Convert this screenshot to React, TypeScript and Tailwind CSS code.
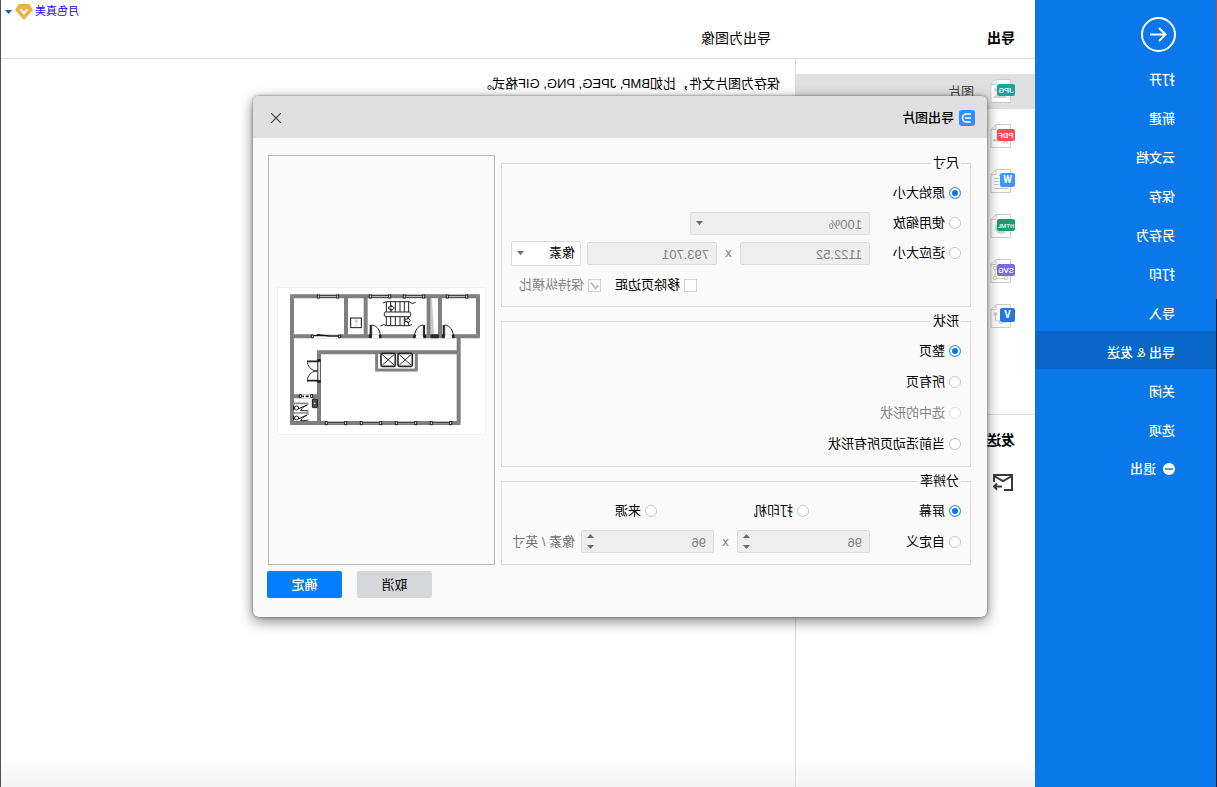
import React, { useState } from 'react';
import clsx from 'clsx';

type Format = { id: string; label?: string; color: string; badge: string; wide: boolean };

const menuItems = ['打开', '新建', '云文档', '保存', '另存为', '打印', '导入', '导出 & 发送', '关闭', '选项'];

const formats: Format[] = [
  { id: 'jpg', label: '图片', color: '#12a89d', badge: 'JPG', wide: true },
  { id: 'pdf', color: '#ff4b55', badge: 'PDF', wide: true },
  { id: 'word', color: '#3f96ff', badge: 'W', wide: false },
  { id: 'html', color: '#12a06e', badge: 'HTML', wide: true },
  { id: 'svg', color: '#7d6be0', badge: 'SVG', wide: true },
  { id: 'visio', color: '#2a74d8', badge: 'V', wide: false },
];

const shapeOptions = [
  { label: '整页', disabled: false },
  { label: '所有页', disabled: false },
  { label: '选中的形状', disabled: true },
  { label: '当前活动页所有形状', disabled: false },
];

const DocArt = ({ id }: { id: string }) => {
  switch (id) {
    case 'jpg':
      return <path d="M7 19l5-5 4 3 3-2 3 4zM19 9a2 2 0 110 4 2 2 0 010-4z" fill="#d4d4d4" />;
    case 'pdf':
      return <path d="M7 19c3-1 4-3 6-3s4 1 9 0M8 17l4 2" fill="none" stroke="#cfcfcf" strokeWidth="2" />;
    case 'word':
      return <path d="M7 6.500h9M16 9.500h5M16 12.500h5M16 15.500h5M7 19.500h14" stroke="#c4c4c4" />;
    case 'html':
      return <circle cx="14" cy="14" r="6" fill="#d4d4d4" />;
    case 'svg':
      return <path d="M8.500 8.500h11M8.500 19.500h11M18.500 7.500h3v3h-3zM18.500 17.500h3v3h-3zM7.500 17.500h3v3h-3zM20 11v6" fill="none" stroke="#cfcfcf" />;
    default:
      return (
        <g fill="none" stroke="#cfcfcf">
          <path d="M19.500 10v7h-5M8.500 18.500h5" />
          <circle cx="19.500" cy="10" r="1.500" fill="#cfcfcf" />
          <path d="M12.500 16.500h3v3h-3z" />
        </g>
      );
  }
};

const FormatIcon = ({ format }: { format: Format }) => (
  <svg width="25" height="25" viewBox="0 0 25 25" aria-hidden="true" className="font-[Roboto,sans-serif]">
    <path d="M4.500.5H19l5 5v18H4.500z" fill="#fff" stroke="#cdcdcd" />
    <path d="M19 .5v5h5" fill="none" stroke="#cdcdcd" />
    <DocArt id={format.id} />
    <rect x="0" y={format.wide ? 5 : 4} width={format.wide ? 18 : 15} height={format.wide ? 12 : 14} rx="2" fill={format.color} />
    <text
      x={format.wide ? 9 : 7.5}
      y="14"
      textAnchor="middle"
      fill="#fff"
      fontWeight={format.wide ? 500 : 700}
      fontSize={format.badge === 'HTML' ? 6 : format.wide ? 8 : 10}
    >
      {format.badge}
    </text>
  </svg>
);

const Caret = ({ up = false }: { up?: boolean }) => (
  <svg width="7" height="4" viewBox="0 0 7 4" aria-hidden="true">
    <path d={up ? 'M0 4h7L3.500 0z' : 'M0 0h7L3.500 4z'} fill="currentColor" />
  </svg>
);

const Radio = ({ name, label, checked, disabled, className }: {
  name: string;
  label: string;
  checked?: boolean;
  disabled?: boolean;
  className?: string;
}) => (
  <label className={clsx('flex shrink-0 items-center gap-1 whitespace-nowrap', disabled && 'text-[#858585]', className)}>
    <input
      type="radio"
      name={name}
      defaultChecked={checked}
      disabled={disabled}
      className="size-3 appearance-none rounded-full border border-[#c8c8c8] bg-white checked:border-[#4d97f0] checked:bg-[#0a73eb] checked:shadow-[inset_0_0_0_2px_#fff] disabled:border-[#e4e4e4]"
    />
    {label}
  </label>
);

const Group = ({ title, className, children }: { title: string; className: string; children: React.ReactNode }) => (
  <fieldset className={clsx('border border-[#dcdcdc] px-[9px]', className)}>
    <legend className="px-0.5 leading-5">{title}</legend>
    {children}
  </fieldset>
);

const Dropdown = ({ label, value, disabled, className }: {
  label: string;
  value: string;
  disabled?: boolean;
  className: string;
}) => (
  <div className={clsx('relative', className)}>
    <select
      aria-label={label}
      disabled={disabled}
      className="h-full w-full appearance-none rounded-xs border border-[#dcdcdf] bg-white pl-[5px] disabled:bg-[#eee] disabled:pt-0.5 disabled:pl-[7px] disabled:text-[#808080] disabled:opacity-100"
    >
      <option>{value}</option>
    </select>
    <span className="pointer-events-none absolute inset-y-0 right-[6px] flex items-center text-[#6a6a6a]">
      <Caret />
    </span>
  </div>
);

const SizeInput = ({ label, value }: { label: string; value: string }) => (
  <input
    type="text"
    aria-label={label}
    defaultValue={value}
    disabled
    className="h-[23px] w-[130px] rounded-xs border border-[#dcdcdf] bg-[#eee] px-[7px] pt-0.5 text-[#808080]"
  />
);

const Spinner = ({ label, value }: { label: string; value: string }) => (
  <div className="flex h-[23px] w-[133px] rounded-xs border border-[#dcdcdf] bg-[#eee] pr-[5px] pl-[7px] text-[#808080]">
    <input type="text" aria-label={label} defaultValue={value} disabled className="min-w-0 flex-1 pt-0.5" />
    <span className="flex flex-col justify-between py-[3px] text-[#6a6a6a]">
      <Caret up />
      <Caret />
    </span>
  </div>
);

const Times = () => <span className="w-[23px] text-center text-[#808080]">x</span>;

const windows = [
  [130, 33], [286, 33], [388, 33], [517, 33],
  [154, 413], [259, 413], [364, 413], [469, 413],
];

const FloorPlan = () => (
  <svg viewBox="0 0 621 438" className="w-[209px] border border-[#f3f3f3] bg-white" role="img" aria-label="预览">
    {/* walls run right to left on the sheet */}
    <g transform="matrix(-1 0 0 1 630 -8)" fill="none">
      <g stroke="#7f7f7f" strokeWidth="12">
        <path d="M51 27V419M45 33H615M609 27V159M45 153H615M551 153V419M45 413H557" />
        <path d="M213 33V153M272 33V153M461 33V153M495 33V153" />
        <path d="M126 201H551M132 195V413M51 333H132" />
        <path d="M305 201V254H424V201" strokeWidth="9" />
      </g>
      <path d="M467 39h4l6 108h-10z" fill="#c9c9c9" />
      <path d="M46 28l10 10M605 38l9-10M605 148l9 10M46 418l10-10M547 408l9 10M127 196l10 10M547 206l9-10M300 258l9-9M428 258l-9-9" stroke="#c4c4c4" strokeWidth="1" />
      {windows.map(([x, y]) => (
        <g key={`${x}-${y}`} stroke="#222">
          <rect x={x} y={y - 5} width="58" height="10" fill="#fff" stroke="none" />
          <path d={`M${x} ${y - 2}h58M${x} ${y + 3}h58`} strokeWidth="3" />
          <rect x={x - 3} y={y - 4} width="6" height="9" fill="#fff" strokeWidth="3" />
          <rect x={x + 55} y={y - 4} width="6" height="9" fill="#fff" strokeWidth="3" />
        </g>
      ))}
      {/* sliding door */}
      <path d="M114 153H194" stroke="#fff" strokeWidth="12" />
      <path d="M116 151h44M126 148l34 4h34" stroke="#111" strokeWidth="4" />
      <path d="M109 149h6v8h-6zM191 149h6v8h-6z" fill="#fff" stroke="#111" strokeWidth="3" />
      {/* hinged doors */}
      <path d="M289 153H314M420 153H447M508 153H533" stroke="#fff" strokeWidth="12" />
      <g stroke="#222" strokeWidth="3">
        <path d="M290 153V119c16 2 26 16 26 34M445 153V119c-16 2-26 16-26 34M509 153V119c16 2 26 16 26 34" />
        <path d="M286 119v34M448 119v34M505 119v34" strokeWidth="4" />
        <path d="M283 149h6v8h-6zM313 149h5v8h-5zM416 149h5v8h-5zM446 149h6v8h-6zM502 149h6v8h-6zM532 149h5v8h-5z" fill="#222" />
        <path d="M129 226h7v62h-7z" fill="#fff" strokeWidth="2" />
        <path d="M97 231c4 18 16 26 31 26-15 0-27 8-31 26" />
        <path d="M96 228h34M96 286h34" strokeWidth="5" />
        <path d="M127 223h9v5h-9zM127 286h9v5h-9z" fill="#222" />
      </g>
      <rect x="466" y="147" width="26" height="12" rx="4" fill="#2c2c2c" />
      {/* lifts */}
      <path d="M310 207H418V249H310z" fill="#fff" />
      <g stroke="#2b2b2b">
        <rect x="318" y="204" width="43" height="39" rx="4" strokeWidth="5" fill="#fff" />
        <rect x="369" y="204" width="43" height="39" rx="4" strokeWidth="5" fill="#fff" />
        <path d="M322 208l35 31M357 208l-35 31M373 208l35 31M408 208l-35 31" strokeWidth="3" />
      </g>
      {/* stairs */}
      <g stroke="#222" strokeWidth="3">
        <path d="M324 53l10-4h68l10 6 10-4M316 122l10-4 8 3h68l9-3" />
        <path d="M334 49v72M347 49v72M361 49v72M375 49v72M388 49v72M401 49v72" />
        <rect x="328" y="80" width="79" height="14" rx="4" fill="#fff" />
        <path d="M341 65h8v-5l9 8-9 8v-5h-8zM390 101h8v-4l8 8-8 8v-4h-8z" fill="#fff" />
      </g>
      <rect x="227" y="98" width="32" height="29" stroke="#111" strokeWidth="3" fill="#fff" />
      <path d="M239 103h9v9h-9z" fill="#d9c9c2" />
      <path d="M241 117h5v5h-5z" fill="#b9cfe8" />
      {/* wash room */}
      <path d="M78 333h30" stroke="#fff" strokeWidth="10" />
      <g stroke="#111">
        <path d="M82 333h5M92 333h9" strokeWidth="5" />
        <path d="M73 328h6v9h-6zM107 328h6v9h-6z" strokeWidth="3" fill="#fff" />
        <rect x="112" y="341" width="15" height="26" rx="3" fill="#555" strokeWidth="3" />
        <circle cx="119" cy="354" r="4" fill="#ddd" strokeWidth="2" />
      </g>
      <path d="M56 354H98M56 383H98M98 352v8M98 374v14M98 402v8" stroke="#8a8a8a" strokeWidth="5" />
      <g stroke="#222" strokeWidth="3">
        <path d="M56 361v14M56 391v14" strokeWidth="4" />
        <circle cx="65" cy="368" r="6" />
        <circle cx="65" cy="398" r="6" />
        <path d="M72 370l24-11M76 377c6-10 12-15 20-17M78 376h18M72 400l24-11M76 407c6-10 12-15 20-17M78 406h18" />
      </g>
    </g>
  </svg>
);

const Sidebar = () => (
  <aside className="w-[181px] shrink-0 bg-[#0a77eb] pt-[17px] font-medium text-white">
    <button type="button" aria-label="返回" className="ml-10 block">
      <svg width="35" height="35" viewBox="0 0 35 35" fill="none" stroke="currentColor" strokeWidth="2">
        <circle cx="17.500" cy="17.500" r="16.500" />
        <path d="M26 17.500H11M17 11l-6.500 6.500L17 24" />
      </svg>
    </button>
    <nav className="mt-[6px] flex flex-col gap-px">
      {menuItems.map((item, i) => (
        <button
          key={item}
          type="button"
          className={clsx('h-[38px] pt-1.5 pl-[41px] text-left', i === 7 && 'bg-[#0766c6]')}
        >
          {item}
        </button>
      ))}
      <button type="button" className="flex h-[38px] items-center gap-[7px] pt-1 pl-[41px] text-left">
        <svg width="12" height="12" viewBox="0 0 12 12" aria-hidden="true">
          <circle cx="6" cy="6" r="6" fill="#fff" />
          <path d="M2 6h8" stroke="#0a77eb" strokeWidth="1.500" />
        </svg>
        退出
      </button>
    </nav>
  </aside>
);

const ExportDialog = () => (
  <div
    role="dialog"
    aria-label="导出图片"
    className="absolute top-24 left-[230px] w-[734px] overflow-hidden rounded-md bg-[#fafafa] shadow-[0_4px_14px_rgba(0,0,0,0.5),0_0_3px_rgba(0,0,0,0.5)]"
  >
    <div className="flex h-[42px] items-center bg-[#e0e0e0] pt-0.5 pr-[18px] pl-3 font-medium">
      <svg width="16" height="16" viewBox="0 0 16 16" aria-hidden="true">
        <rect width="16" height="16" rx="3" fill="#2f8fff" />
        <path d="M4 4h4.500a4 4 0 010 8H4M4 8h6" fill="none" stroke="#fff" strokeWidth="1.600" />
      </svg>
      <h2 className="ml-[5px]">导出图片</h2>
      <button type="button" aria-label="关闭" className="ml-auto">
        <svg width="10" height="10" viewBox="0 0 10 10" stroke="#444" strokeWidth="1.200">
          <path d="M0 0l10 10M10 0L0 10" />
        </svg>
      </button>
    </div>

    <form className="pt-[15px] pr-[14px] pb-[19px] pl-4" onSubmit={e => e.preventDefault()}>
      <div className="flex gap-[6px]">
        <div className="flex w-[470px] flex-col gap-1">
          <Group title="尺寸" className="pt-[5px] pb-[6px]">
            <div className="flex h-[30px] items-center">
              <Radio name="size" label="原始大小" checked />
            </div>
            <div className="flex h-[30px] items-center">
              <Radio name="size" label="使用缩放" className="w-[91px]" />
              <Dropdown label="缩放" value="100%" disabled className="h-[23px] w-[180px]" />
            </div>
            <div className="flex h-[30px] items-center">
              <Radio name="size" label="适应大小" className="w-[91px]" />
              <SizeInput label="宽度" value="1122.52" />
              <Times />
              <SizeInput label="高度" value="793.701" />
              <Dropdown label="单位" value="像素" className="ml-[6px] h-[25px] w-[70px]" />
            </div>
            <div className="mt-0.5 flex h-[30px] items-center justify-end gap-[14px] pr-2">
              <label className="flex items-center gap-1">
                <input type="checkbox" className="size-[13px] appearance-none border border-[#d4d4d4] bg-white" />
                移除页边距
              </label>
              <label className="flex items-center gap-1 text-[#858585]">
                <span className="relative flex">
                  <input
                    type="checkbox"
                    defaultChecked
                    disabled
                    className="size-[13px] appearance-none border border-[#d4d4d4] bg-[#fafafa]"
                  />
                  <svg className="absolute inset-0 size-[13px]" viewBox="0 0 13 13" fill="none" stroke="#bdbdbd" strokeWidth="2">
                    <path d="M3 6.500l2.500 3L10 3.500" />
                  </svg>
                </span>
                保持纵横比
              </label>
            </div>
          </Group>

          <Group title="形状" className="pt-1 pb-[7px]">
            {shapeOptions.map((option, i) => (
              <div key={option.label} className="flex h-[31px] items-center">
                <Radio name="shape" label={option.label} checked={i === 0} disabled={option.disabled} />
              </div>
            ))}
          </Group>

          <Group title="分辨率" className="pt-1 pb-[7px]">
            <div className="flex h-[31px] items-center">
              <Radio name="dpi" label="屏幕" checked className="w-[152px]" />
              <Radio name="dpi" label="打印机" className="w-[152px]" />
              <Radio name="dpi" label="来源" />
            </div>
            <div className="flex h-[31px] items-center">
              <Radio name="dpi" label="自定义" className="w-[91px]" />
              <Spinner label="水平分辨率" value="96" />
              <Times />
              <Spinner label="垂直分辨率" value="96" />
              <span className="ml-[6px] text-[#707070]">像素 / 英寸</span>
            </div>
          </Group>
        </div>

        <div className="mt-0.5 mr-px flex flex-1 items-center justify-center border border-[#b8b8b8] pt-0.5">
          <FloorPlan />
        </div>
      </div>

      <div className="mt-[6px] flex justify-end gap-[15px]">
        <button type="button" className="h-[27px] w-[75px] rounded-xs bg-[#d5d7db]">取消</button>
        <button type="submit" className="h-[27px] w-[75px] rounded-xs bg-[#007fff] font-medium text-white">确定</button>
      </div>
    </form>
  </div>
);

const App = () => {
  const [selected, setSelected] = useState('jpg');

  return (
    <div className="relative flex min-h-screen -scale-x-100 font-['Liberation_Sans','Noto_Sans_CJK_SC',sans-serif] text-[13px] leading-5 text-black">
      <div className="w-px bg-linear-to-b from-[#a8504f] from-38% to-[#1b1b2b] to-38%" />
      <Sidebar />

      <div className="flex min-w-0 flex-1 flex-col bg-linear-to-b from-white from-96% to-[#f3f3f3]">
        <header className="flex items-start border-b border-[#dcdcdc] text-sm">
          <h1 className="w-60 shrink-0 pt-7 pb-[10px] pl-5 font-bold">导出</h1>
          <h2 className="pt-7 pb-[10px] pl-6">导出为图像</h2>
          <button type="button" className="mt-1 mr-1 ml-auto flex items-center text-[11px] text-[#1a06e6]">
            月色真美
            <svg width="18" height="16" viewBox="0 0 18 16" className="ml-0.5" aria-hidden="true">
              <path d="M4 0h10l4 6-9 10L0 6z" fill="#f0ae48" />
              <path d="M5.500 5L9 9.500 12.500 5" fill="none" stroke="#fff" strokeWidth="2" />
            </svg>
            <span className="ml-[3px] text-[#0b5fb0]">
              <Caret />
            </span>
          </button>
        </header>

        <div className="flex flex-1">
          <section className="w-60 shrink-0 border-r border-[#dcdcdc] pt-[15px]">
            <ul className="flex flex-col gap-[10px]">
              {formats.map(format => (
                <li key={format.id}>
                  <button
                    type="button"
                    aria-label={format.label ?? format.badge}
                    onClick={() => setSelected(format.id)}
                    className={clsx(
                      'flex h-[35px] w-full items-center gap-4 pl-5 text-[#444]',
                      selected === format.id && 'bg-[#e0e0e0]',
                    )}
                  >
                    <FormatIcon format={format} />
                    {format.label}
                  </button>
                </li>
              ))}
            </ul>
            <div className="mt-20 border-t border-[#dcdcdc] pt-[15px] pl-5">
              <h2 className="text-sm font-bold">发送</h2>
              <button type="button" aria-label="发送邮件" className="mt-6 block">
                <svg width="22" height="17" viewBox="0 0 22 17" fill="none" stroke="#3a3a3a" strokeWidth="2">
                  <path d="M11 16H3V1h18v7M3 2l9 5 9-5" />
                  <path d="M13 12.500h8M18 9.500l3 3-3 3" />
                </svg>
              </button>
            </div>
          </section>

          <main className="flex-1 pt-[15px] pl-[15px]">
            <p>保存为图片文件，比如BMP, JPEG, PNG, GIF格式。</p>
          </main>
        </div>
      </div>

      <div className="w-px bg-[#5a4a5c]" />
      <ExportDialog />
    </div>
  );
};

export default App;
